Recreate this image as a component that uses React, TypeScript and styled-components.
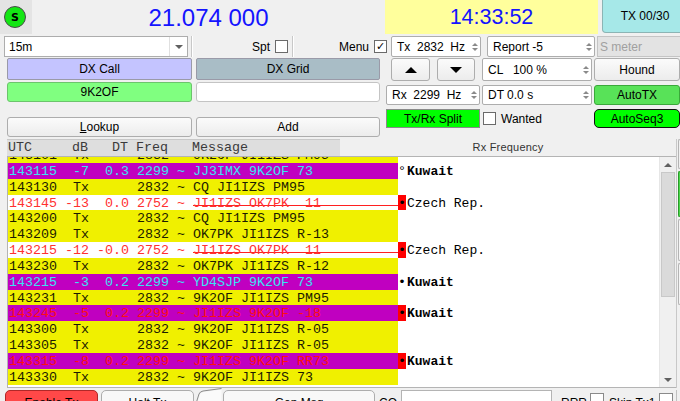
import { FC } from 'react';
import styled, { createGlobalStyle, css } from 'styled-components';

const GlobalStyle = createGlobalStyle`
  html, body {
    margin: 0;
    padding: 0;
  }
  body {
    width: 680px;
    height: 401px;
    overflow: hidden;
    background: #f0f0f0;
    font-family: "Liberation Sans", Arial, sans-serif;
    font-size: 12px;
    color: #000;
  }
`;

type Kind = 'tx' | 'other' | 'strike' | 'mine';
type Marker = 'red' | 'dot' | 'deg';

interface Decode {
    pre: string;
    msg: string;
    kind: Kind;
    marker?: Marker;
    country?: string;
    bold?: boolean;
}

const decodes: Decode[] = [
    { pre: '143101  Tx      2832 ~ ', msg: '9K2OF JI1IZS PM95', kind: 'tx' },
    { pre: '143115  -7  0.3 2299 ~ ', msg: 'JJ3IMX 9K2OF 73', kind: 'other', marker: 'deg', country: 'Kuwait', bold: true },
    { pre: '143130  Tx      2832 ~ ', msg: 'CQ JI1IZS PM95', kind: 'tx' },
    { pre: '143145 -13  0.0 2752 ~ ', msg: 'JI1IZS OK7PK  11', kind: 'strike', marker: 'red', country: 'Czech Rep.' },
    { pre: '143200  Tx      2832 ~ ', msg: 'CQ JI1IZS PM95', kind: 'tx' },
    { pre: '143209  Tx      2832 ~ ', msg: 'OK7PK JI1IZS R-13', kind: 'tx' },
    { pre: '143215 -12 -0.0 2752 ~ ', msg: 'JI1IZS OK7PK  11', kind: 'strike', marker: 'red', country: 'Czech Rep.' },
    { pre: '143230  Tx      2832 ~ ', msg: 'OK7PK JI1IZS R-12', kind: 'tx' },
    { pre: '143215  -3  0.2 2299 ~ ', msg: 'YD4SJP 9K2OF 73', kind: 'other', marker: 'dot', country: 'Kuwait', bold: true },
    { pre: '143231  Tx      2832 ~ ', msg: '9K2OF JI1IZS PM95', kind: 'tx' },
    { pre: '143245  -5  0.2 2299 ~ ', msg: 'JI1IZS 9K2OF -18', kind: 'mine', marker: 'red', country: 'Kuwait', bold: true },
    { pre: '143300  Tx      2832 ~ ', msg: '9K2OF JI1IZS R-05', kind: 'tx' },
    { pre: '143305  Tx      2832 ~ ', msg: '9K2OF JI1IZS R-05', kind: 'tx' },
    { pre: '143315  -8  0.2 2299 ~ ', msg: 'JI1IZS 9K2OF RR73', kind: 'mine', marker: 'red', country: 'Kuwait', bold: true },
    { pre: '143330  Tx      2832 ~ ', msg: '9K2OF JI1IZS 73', kind: 'tx' },
];

const SpinBox: FC<{ text: string }> = ({ text }) => (
    <SpinField>
        <SpinText>{text}</SpinText>
        <SpinArrows>
            <ArrowUp />
            <ArrowDown />
        </SpinArrows>
    </SpinField>
);

const App: FC = () => {
    return (
        <Window>
            <GlobalStyle />
            <TopBar>
                <LedCell>
                    <Led>S</Led>
                </LedCell>
                <FreqDisplay>21.074 000</FreqDisplay>
                <ClockDisplay>14:33:52</ClockDisplay>
                <TxCounter>TX 00/30</TxCounter>
            </TopBar>

            <OptionRow>
                <Combo>
                    <ComboText>15m</ComboText>
                    <ComboButton>
                        <ArrowDown $size={4} $color="#606060" />
                    </ComboButton>
                </Combo>
                <VSep />
                <CheckGroup $width={96}>
                    Spt <CheckBox />
                </CheckGroup>
                <VSep />
                <CheckGroup $width={94}>
                    Menu <CheckBox>✓</CheckBox>
                </CheckGroup>
                <TxSpin>
                    <SpinBox text="Tx  2832  Hz" />
                </TxSpin>
                <ReportSpin>
                    <SpinBox text="Report -5" />
                </ReportSpin>
                <SMeter>S meter</SMeter>
            </OptionRow>

            <ControlArea>
                <LeftPanel>
                    <CallGrid>
                        <HeadButton $bg="#c4c4ff">DX Call</HeadButton>
                        <HeadButton $bg="#a9bdc6">DX Grid</HeadButton>
                        <CallField $bg="#80ff80" $border="#6cc46c">9K2OF</CallField>
                        <CallField $bg="#ffffff" $border="#c4c4c4" />
                    </CallGrid>
                    <LookupGrid>
                        <PlainButton>
                            <u>L</u>ookup
                        </PlainButton>
                        <PlainButton>Add</PlainButton>
                    </LookupGrid>
                </LeftPanel>

                <RightPanel>
                    <UpDownCell>
                        <PlainButton>
                            <ArrowUp $size={6} $color="#000" />
                        </PlainButton>
                        <PlainButton>
                            <ArrowDown $size={6} $color="#000" />
                        </PlainButton>
                    </UpDownCell>
                    <SpinBox text="CL   100 %" />
                    <PlainButton>Hound</PlainButton>

                    <SpinBox text="Rx  2299  Hz" />
                    <SpinBox text="DT 0.0 s" />
                    <ColorButton $bg="#58e258" $border="#3aa83a">AutoTX</ColorButton>

                    <ColorButton $bg="#00ff00" $border="#8a8a8a" $square>Tx/Rx Split</ColorButton>
                    <WantedCell>
                        <CheckBox />
                        Wanted
                    </WantedCell>
                    <ColorButton $bg="#00ff00" $border="#111" $round>AutoSeq3</ColorButton>
                </RightPanel>
            </ControlArea>

            <MainRow>
                <TableArea>
                    <HeaderRow>
                        <ColumnHeader>{'UTC     dB   DT Freq   Message'}</ColumnHeader>
                        <RxTitle>Rx Frequency</RxTitle>
                    </HeaderRow>
                    <ListFrame>
                        <ListViewport>
                            <ListInner>
                                {decodes.map((d, i) => (
                                    <DecodeRow key={i}>
                                        <DecodeMain $kind={d.kind}>
                                            <span>{d.pre}</span>
                                            <DecodeMsg $strike={d.kind === 'strike'}>{d.msg}</DecodeMsg>
                                        </DecodeMain>
                                        <MarkerCell $red={d.marker === 'red'}>
                                            {d.marker === 'deg' ? '°' : d.marker ? '•' : ''}
                                        </MarkerCell>
                                        {d.country && <Country $bold={d.bold}>{d.country}</Country>}
                                    </DecodeRow>
                                ))}
                            </ListInner>
                        </ListViewport>
                        <ScrollBar>
                            <ScrollArrow>
                                <ArrowUp $size={4} $color="#606060" />
                            </ScrollArrow>
                            <ScrollThumb />
                            <ScrollTrack />
                            <ScrollArrow>
                                <ArrowDown $size={4} $color="#606060" />
                            </ScrollArrow>
                        </ScrollBar>
                    </ListFrame>
                </TableArea>
                <EdgeStrip>
                    <EdgePiece $bg="#f0f0f0" $h={28} />
                    <EdgePiece $bg="#4ad84a" $h={44} $border="#2a9a2a" />
                    <EdgePiece $bg="#f4f4f4" $h={40} />
                    <EdgePiece $bg="#f4f4f4" $h={40} />
                </EdgeStrip>
            </MainRow>

            <BottomRow>
                <BottomButton $width={93} $ml={5} $bg="#ff4848" $border="#b02828">Enable Tx</BottomButton>
                <BottomButton $width={93} $ml={3}>Halt Tx</BottomButton>
                <TabCorner viewBox="0 0 26 14">
                    <path d="M1.5 14 L4 6.5 Q5 4.5 7.5 4 L25.5 1.5 L25.5 14 Z" fill="#fafafa" />
                    <path d="M0.5 14 L3 6 Q4 3.5 7 3 L25.5 0.5" fill="none" stroke="#8a8a8a" />
                </TabCorner>
                <BottomButton $width={152} $ml={1}>Gen Msg</BottomButton>
                <BottomLabel $ml={4}>CQ</BottomLabel>
                <BottomField />
                <BottomLabel $ml={9}>RRR</BottomLabel>
                <BottomCheck $ml={3} />
                <BottomLabel $ml={5}>Skip Tx1</BottomLabel>
                <BottomCheck $ml={4} />
                <BottomSep />
            </BottomRow>
        </Window>
    );
};

const Window = styled.div`
    width: 680px;
    height: 401px;
    overflow: hidden;
    display: flex;
    flex-direction: column;
`;

/* ---------- top bar ---------- */

const TopBar = styled.div`
    height: 34px;
    display: flex;
    flex: none;
`;

const LedCell = styled.div`
    width: 32px;
    background: #e4e4e4;
    display: flex;
    align-items: center;
    padding-left: 4px;
    box-sizing: border-box;
`;

const Led = styled.div`
    width: 22px;
    height: 22px;
    border-radius: 50%;
    background: #14e614;
    border: 1px solid #4a4a4a;
    box-sizing: border-box;
    display: flex;
    align-items: center;
    justify-content: center;
    font-family: "DejaVu Sans", sans-serif;
    font-weight: bold;
    font-size: 11px;
`;

const FreqDisplay = styled.div`
    flex: 1;
    background: #f0f0f0;
    color: #1414ff;
    font-size: 24px;
    display: flex;
    align-items: center;
    justify-content: center;
    padding-top: 1px;
`;

const ClockDisplay = styled.div`
    width: 213px;
    background: #ffff9c;
    color: #1414ff;
    font-size: 21.5px;
    display: flex;
    align-items: center;
    justify-content: center;
    padding-top: 1px;
`;

const TxCounter = styled.div`
    width: 86px;
    margin-left: 4px;
    margin-right: -8px;
    height: 33px;
    background: #a6e8e8;
    border: 1px solid #8cb4b4;
    border-top: none;
    border-radius: 0 0 0 4px;
    box-sizing: border-box;
    display: flex;
    align-items: center;
    justify-content: center;
    font-size: 12px;
`;

/* ---------- option row ---------- */

const OptionRow = styled.div`
    height: 21px;
    margin-top: 2px;
    display: flex;
    align-items: stretch;
    flex: none;
`;

const Combo = styled.div`
    margin-left: 4px;
    width: 184px;
    background: #fff;
    border: 1px solid #adadad;
    box-sizing: border-box;
    display: flex;
    align-items: center;
`;

const ComboText = styled.span`
    flex: 1;
    padding-left: 4px;
`;

const ComboButton = styled.div`
    width: 17px;
    height: 100%;
    border-left: 1px solid #e0e0e0;
    display: flex;
    align-items: center;
    justify-content: center;
`;

const VSep = styled.div`
    width: 1px;
    margin-left: 3px;
    background: #c8c8c8;
    border-right: 1px solid #fff;
`;

const CheckGroup = styled.div<{ $width: number }>`
    width: ${({ $width }) => $width}px;
    display: flex;
    align-items: center;
    justify-content: flex-end;
    gap: 5px;
    padding-right: 1px;
    box-sizing: border-box;
`;

const CheckBox = styled.span`
    width: 13px;
    height: 13px;
    background: #fff;
    border: 1px solid #6a6a6a;
    box-sizing: border-box;
    display: inline-flex;
    align-items: center;
    justify-content: center;
    font-family: "DejaVu Sans", sans-serif;
    font-weight: bold;
    font-size: 11px;
    line-height: 1;
`;

const TxSpin = styled.div`
    margin-left: 3px;
    width: 90px;
    display: flex;
`;

const ReportSpin = styled.div`
    margin-left: 6px;
    width: 108px;
    display: flex;
`;

const SMeter = styled.div`
    margin-left: 2px;
    flex: 1;
    background: #e3e3e3;
    border: 1px solid #c4c4c4;
    border-right: none;
    color: #a0a0a0;
    display: flex;
    align-items: center;
    padding-left: 2px;
`;

const SpinField = styled.div`
    flex: 1;
    min-width: 0;
    height: 100%;
    background: #fff;
    border: 1px solid #adadad;
    border-radius: 2px;
    box-sizing: border-box;
    display: flex;
    align-items: center;
    padding-left: 5px;
`;

const SpinText = styled.span`
    flex: 1;
    white-space: pre;
`;

const SpinArrows = styled.div`
    width: 11px;
    display: flex;
    flex-direction: column;
    align-items: center;
    gap: 2px;
`;

const triangle = css<{ $size?: number; $color?: string }>`
    width: 0;
    height: 0;
    border-left: ${({ $size = 3 }) => $size}px solid transparent;
    border-right: ${({ $size = 3 }) => $size}px solid transparent;
`;

const ArrowUp = styled.span<{ $size?: number; $color?: string }>`
    ${triangle};
    border-bottom: ${({ $size = 3 }) => $size}px solid ${({ $color = '#8a8a8a' }) => $color};
`;

const ArrowDown = styled.span<{ $size?: number; $color?: string }>`
    ${triangle};
    border-top: ${({ $size = 3 }) => $size}px solid ${({ $color = '#8a8a8a' }) => $color};
`;

/* ---------- controls ---------- */

const ControlArea = styled.div`
    height: 82px;
    display: flex;
    flex: none;
`;

const LeftPanel = styled.div`
    width: 386px;
    padding: 1px 0 0 7px;
    box-sizing: border-box;
`;

const CallGrid = styled.div`
    display: grid;
    grid-template-columns: 185px 184px;
    grid-template-rows: 22px 20px;
    column-gap: 4px;
    row-gap: 2px;
`;

const HeadButton = styled.div<{ $bg: string }>`
    background: ${({ $bg }) => $bg};
    border: 1px solid #9a9aa8;
    border-radius: 2px;
    display: flex;
    align-items: center;
    justify-content: center;
`;

const CallField = styled.div<{ $bg: string; $border: string }>`
    background: ${({ $bg }) => $bg};
    border: 1px solid ${({ $border }) => $border};
    border-radius: 3px;
    display: flex;
    align-items: center;
    justify-content: center;
`;

const LookupGrid = styled.div`
    margin-top: 15px;
    display: grid;
    grid-template-columns: 185px 184px;
    grid-template-rows: 20px;
    column-gap: 4px;
`;

const PlainButton = styled.div`
    background: linear-gradient(#fbfbfb, #ececec);
    border: 1px solid #adadad;
    border-radius: 3px;
    box-sizing: border-box;
    display: flex;
    align-items: center;
    justify-content: center;
`;

const RightPanel = styled.div`
    padding-top: 1px;
    display: grid;
    grid-template-columns: 94px 110px 86px;
    grid-template-rows: 23px 20px 19px;
    column-gap: 2px;
    row-gap: 4px;
`;

const UpDownCell = styled.div`
    display: grid;
    grid-template-columns: 39px 38px;
    column-gap: 7px;
    padding-left: 5px;
`;

const ColorButton = styled.div<{ $bg: string; $border: string; $round?: boolean; $square?: boolean }>`
    background: ${({ $bg }) => $bg};
    border: 1px solid ${({ $border }) => $border};
    border-radius: ${({ $round, $square }) => ($round ? '5px' : $square ? '0' : '3px')};
    display: flex;
    align-items: center;
    justify-content: center;
`;

const WantedCell = styled.div`
    display: flex;
    align-items: center;
    gap: 5px;
    padding-left: 1px;
`;

/* ---------- decode list ---------- */

const MainRow = styled.div`
    display: flex;
    flex: none;
    height: 249px;
`;

const TableArea = styled.div`
    margin-left: 7px;
    width: 669px;
    display: flex;
    flex-direction: column;
`;

const HeaderRow = styled.div`
    height: 17px;
    display: flex;
`;

const ColumnHeader = styled.div`
    width: 333px;
    background: #dedede;
    border-top: 1px solid #c8c8c8;
    box-sizing: border-box;
    padding-left: 1px;
    font-family: "Liberation Mono", "Courier New", monospace;
    font-size: 13.33px;
    line-height: 16px;
    color: #3a3a3a;
    white-space: pre;
`;

const RxTitle = styled.div`
    flex: 1;
    text-align: center;
    font-size: 11px;
    line-height: 17px;
    color: #333;
    letter-spacing: 0.2px;
`;

const ListFrame = styled.div`
    flex: 1;
    display: flex;
    border: 1px solid #b4b4b4;
    border-right: none;
    background: #fff;
`;

const ListViewport = styled.div`
    flex: 1;
    overflow: hidden;
`;

const ListInner = styled.div`
    margin-top: -10px;
    font-family: "Liberation Mono", "Courier New", monospace;
    font-size: 13.33px;
    line-height: 15.85px;
`;

const DecodeRow = styled.div`
    height: 15.85px;
    display: flex;
    white-space: pre;
`;

const kindStyles: Record<Kind, ReturnType<typeof css>> = {
    tx: css`
        background: #f0f000;
        color: #1c1c00;
    `,
    other: css`
        background: #c000c0;
        color: #38e4f4;
    `,
    strike: css`
        background: #fff;
        color: #ff3030;
    `,
    mine: css`
        background: #c000c0;
        color: #ff1010;
    `,
};

const DecodeMain = styled.div<{ $kind: Kind }>`
    width: 390px;
    display: flex;
    padding: 1px 0 0 1px;
    box-sizing: border-box;
    ${({ $kind }) => kindStyles[$kind]};
`;

const DecodeMsg = styled.span<{ $strike: boolean }>`
    flex: 1;
    ${({ $strike }) =>
        $strike &&
        css`
            background: linear-gradient(#ff2020, #ff2020) no-repeat 0 9px / 100% 1px;
        `}
`;

const MarkerCell = styled.div<{ $red: boolean }>`
    width: 8px;
    display: flex;
    justify-content: center;
    padding-top: 1px;
    box-sizing: border-box;
    background: ${({ $red }) => ($red ? '#ff0000' : 'transparent')};
    color: #000;
`;

const Country = styled.div<{ $bold?: boolean }>`
    padding: 1px 0 0 1px;
    font-size: 13px;
    font-weight: ${({ $bold }) => ($bold ? 'bold' : 'normal')};
    color: #000;
`;

const ScrollBar = styled.div`
    width: 16px;
    display: flex;
    flex-direction: column;
    background: #f0f0f0;
    border-left: 1px solid #e6e6e6;
`;

const ScrollArrow = styled.div`
    height: 15px;
    display: flex;
    align-items: center;
    justify-content: center;
`;

const ScrollThumb = styled.div`
    height: 125px;
    margin: 0 1px;
    background: #dadada;
    border: 1px solid #c8c8c8;
    box-sizing: border-box;
`;

const ScrollTrack = styled.div`
    flex: 1;
`;

const EdgeStrip = styled.div`
    flex: 1;
    display: flex;
    flex-direction: column;
    gap: 2px;
    border-left: 1px solid #c8c8c8;
    padding-left: 1px;
`;

const EdgePiece = styled.div<{ $bg: string; $h: number; $border?: string }>`
    height: ${({ $h }) => $h}px;
    background: ${({ $bg }) => $bg};
    border: 1px solid ${({ $border = '#b4b4b4' }) => $border};
    border-right: none;
    border-radius: 4px 0 0 4px;
`;

/* ---------- bottom row ---------- */

const BottomRow = styled.div`
    height: 13px;
    display: flex;
    align-items: flex-start;
    padding-top: 2px;
    box-sizing: border-box;
    overflow: hidden;
`;

const BottomButton = styled.div<{ $width: number; $ml: number; $bg?: string; $border?: string }>`
    flex: none;
    width: ${({ $width }) => $width}px;
    height: 22px;
    margin-left: ${({ $ml }) => $ml}px;
    background: ${({ $bg = '#f8f8f8' }) => $bg};
    border: 1px solid ${({ $border = '#adadad' }) => $border};
    border-radius: 5px;
    box-sizing: border-box;
    display: flex;
    justify-content: center;
    padding-top: 5px;
`;

const TabCorner = styled.svg`
    width: 26px;
    height: 14px;
    margin: -2px 0 0 2px;
    flex: none;
`;

const BottomLabel = styled.span<{ $ml: number }>`
    flex: none;
    margin-left: ${({ $ml }) => $ml}px;
    padding-top: 6px;
    white-space: nowrap;
`;

const BottomField = styled.div`
    flex: none;
    width: 151px;
    height: 20px;
    margin-left: 4px;
    background: #fff;
    border: 1px solid #b4b4b4;
    box-sizing: border-box;
`;

const BottomCheck = styled.div<{ $ml: number }>`
    flex: none;
    width: 14px;
    height: 14px;
    margin: 3px 0 0 ${({ $ml }) => $ml}px;
    background: #fff;
    border: 1px solid #8a8a8a;
    box-sizing: border-box;
`;

const BottomSep = styled.div`
    flex: none;
    width: 1px;
    height: 14px;
    margin-left: 3px;
    background: #c0c0c0;
`;

export default App;
